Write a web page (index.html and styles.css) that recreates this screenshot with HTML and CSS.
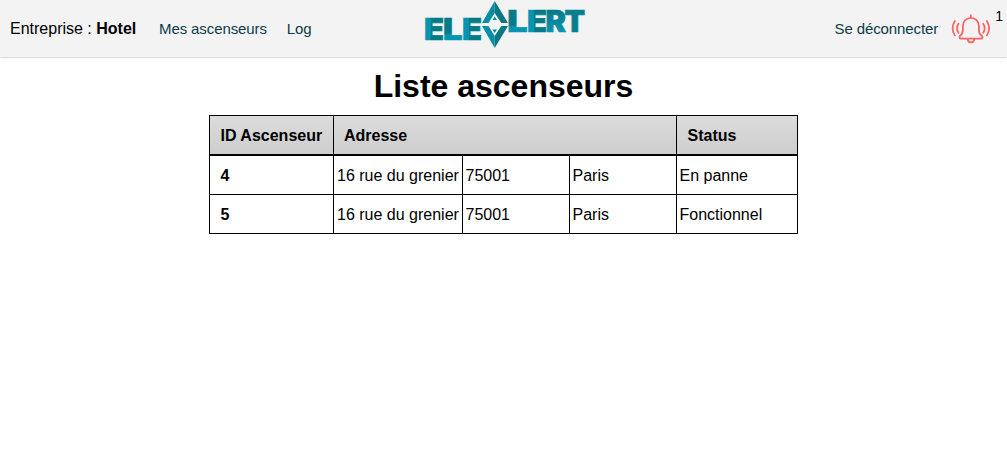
FILE: index.html
```html
<!DOCTYPE html>
<html lang="fr">
<head>
<meta charset="utf-8">
<title>Liste ascenseurs</title>
<link rel="stylesheet" href="styles.css">
</head>
<body>
<header class="navbar">
  <div class="nav-left">
    <span class="company">Entreprise : <b>Hotel</b></span>
    <a class="link elevators" href="#">Mes ascenseurs</a>
    <a class="link" href="#">Log</a>
  </div>
  <svg class="logo" width="162" height="50" viewBox="424 0 162 50" role="img" aria-label="Elevalert">
    <defs>
      <linearGradient id="stem" gradientUnits="userSpaceOnUse" x1="425" y1="0" x2="443" y2="0">
        <stop offset=".3" stop-color="#0695b0"/>
        <stop offset=".34" stop-color="#067b88"/>
      </linearGradient>
      <linearGradient id="stem-2" href="#stem" x1="463" x2="481"/>
      <linearGradient id="stem-3" href="#stem" x1="528" x2="546"/>
      <linearGradient id="foot" gradientUnits="userSpaceOnUse" x1="0" y1="18" x2="0" y2="40">
        <stop offset=".7" stop-color="#067b88"/>
        <stop offset=".76" stop-color="#0695b0"/>
      </linearGradient>
      <linearGradient id="foot-2" href="#foot" y1="9.5" y2="32"/>
      <linearGradient id="tall" gradientUnits="userSpaceOnUse" x1="0" y1="9" x2="0" y2="32">
        <stop offset=".1" stop-color="#067b88"/>
        <stop offset="1" stop-color="#0695b0"/>
      </linearGradient>
    </defs>
    <g class="logo-text">
      <text fill="url(#stem)" stroke="url(#stem)" x="423.9" y="40" textLength="20" lengthAdjust="spacingAndGlyphs">E</text>
      <text fill="url(#foot)" stroke="url(#foot)" x="443" y="40" textLength="19.5" lengthAdjust="spacingAndGlyphs">L</text>
      <text fill="url(#stem-2)" stroke="url(#stem-2)" x="461.9" y="40" textLength="20" lengthAdjust="spacingAndGlyphs">E</text>
      <text fill="url(#foot-2)" stroke="url(#foot-2)" x="507.3" y="31.6" textLength="20.3" lengthAdjust="spacingAndGlyphs">L</text>
      <text fill="url(#stem-3)" stroke="url(#stem-3)" x="526.9" y="31.6" textLength="20" lengthAdjust="spacingAndGlyphs">E</text>
      <text fill="url(#tall)" stroke="url(#tall)" x="545.6" y="31.6" textLength="20.5" lengthAdjust="spacingAndGlyphs">R</text>
      <text fill="#067f8d" stroke="#067f8d" x="564.6" y="31.6" textLength="20.6" lengthAdjust="spacingAndGlyphs">T</text>
    </g>
    <path fill="#078da4" d="M494.7 1 482 23h6.5l6.2-10zM482 26l12.7 22V36l-6.2-10z"/>
    <path fill="#087884" d="M494.7 1 508 23h-6.7l-6.6-10zM508 26l-13.3 22V36l6.6-10z"/>
    <path fill="#078496" d="m494.7 16.5 2.2 3.5h-4.4zM494.7 33l2.2-3.5h-4.4z"/>
  </svg>
  <div class="nav-right">
    <a class="link" href="#">Se déconnecter</a>
    <svg class="bell" width="40" height="32" viewBox="951 12 40 32">
      <path d="M970.8 14.2v2.5M960.8 37.7h20.4c1.7 0 1.5-2.4.3-3.2-2.3-1.5-2.6-3.3-2.6-5.5v-4.2a8 8 0 0 0-16 0V29c0 2.2-.4 4-2.5 5.5-1.2.8-1.3 3.2.4 3.2z"/>
      <path d="M967.8 38.3c.5 4.2 5.8 4.2 6.4 0"/>
      <path d="M958.5 22.8q-3 4.5 0 9M954.8 20q-4.4 7.2 0 14.4M983.2 22.8q3 4.5 0 9M986.9 20q4.4 7.2 0 14.4"/>
    </svg>
    <span class="count">1</span>
  </div>
</header>
<main>
  <h1>Liste ascenseurs</h1>
  <table>
    <colgroup><col class="c-id"><col class="c-street"><col class="c-zip"><col class="c-city"><col class="c-status"></colgroup>
    <thead>
      <tr><th>ID Ascenseur</th><th colspan="3">Adresse</th><th>Status</th></tr>
    </thead>
    <tbody>
      <tr><th>4</th><td>16 rue du grenier</td><td>75001</td><td>Paris</td><td>En panne</td></tr>
      <tr><th>5</th><td>16 rue du grenier</td><td>75001</td><td>Paris</td><td>Fonctionnel</td></tr>
    </tbody>
  </table>
</main>
</body>
</html>
```
FILE: styles.css
```css
* { box-sizing: border-box; }
body {
  margin: 0;
  background: #fff;
  color: #000;
  font: 16px/18px "Liberation Sans", Arial, sans-serif;
}
.navbar {
  display: grid;
  grid-template-columns: 424px 162px 1fr;
  height: 57px;
  background: #f3f3f3;
  box-shadow: 0 0 2px rgba(0, 0, 0, .4);
}
.nav-left, .nav-right { display: flex; align-items: center; }
.nav-left { padding-left: 10px; }
.nav-right { justify-content: flex-end; }
.company { width: 149px; white-space: nowrap; }
.link { color: #0b3c49; font-size: 15px; letter-spacing: -.1px; text-decoration: none; white-space: nowrap; }
.elevators { margin-right: 20px; }
.logo-text { font: 900 30px Inter, sans-serif; stroke-width: .7; }
.bell {
  margin-left: 13px;
  fill: none;
  stroke: #fb6464;
  stroke-width: 1.8;
  stroke-linecap: round;
  stroke-linejoin: round;
}
.count { align-self: flex-start; margin: 8px 4px 0; font-size: 14px; line-height: 17px; }
h1 { margin: 11px 0 10px; font-size: 32px; line-height: 37px; text-align: center; }
table {
  width: 589px;
  margin: 0 auto;
  table-layout: fixed;
  border-collapse: collapse;
}
.c-id { width: 124px; }
.c-street { width: 129px; }
.c-zip, .c-city { width: 107px; }
.c-status { width: 121px; }
th, td {
  height: 39px;
  padding: 2px 3px 0;
  border: 1px solid #000;
  text-align: left;
  white-space: nowrap;
}
td { padding-left: 2.5px; }
td:nth-child(2) { padding-left: 3px; }
th { padding-left: 10.5px; }
thead { background: linear-gradient(#dcdcdc, #cdcdcd); }
thead th { height: 39px; padding-top: 3px; border-bottom-width: 2px; }
thead th:nth-child(2) { padding-left: 10px; }
tbody tr:first-child > * { height: 40px; }
```
